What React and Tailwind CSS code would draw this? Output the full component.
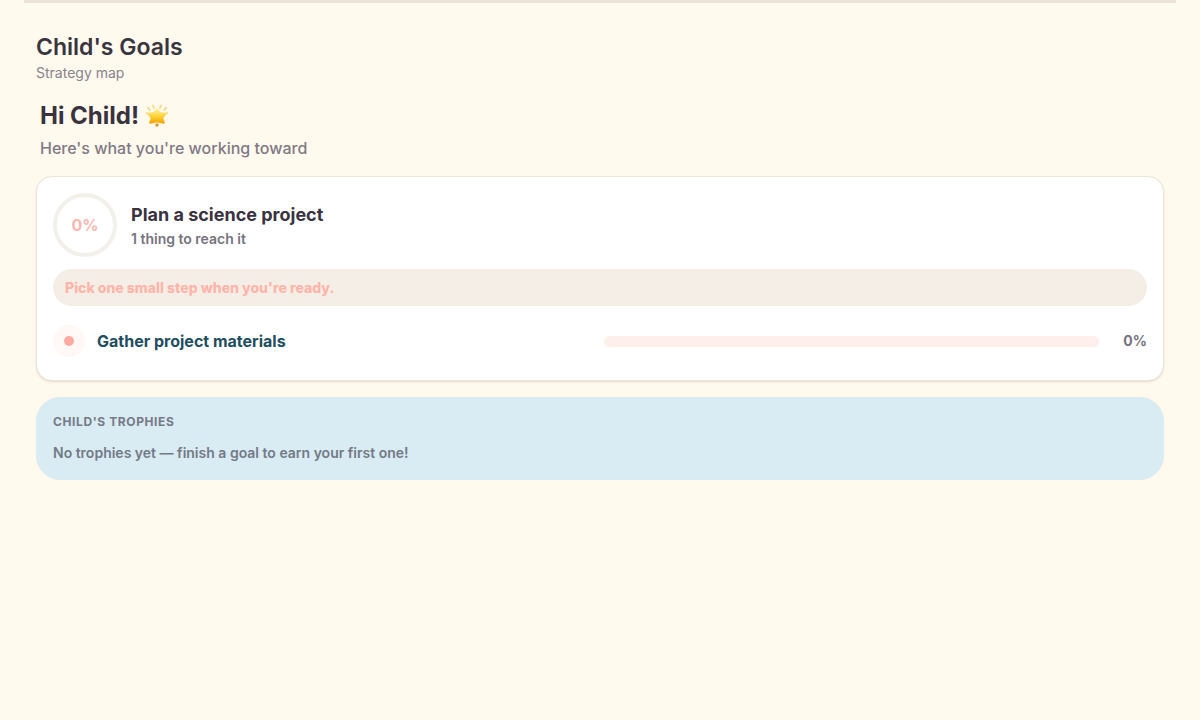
const GOALS = [
  {
    title: "Plan a science project",
    progress: 0,
    hint: "Pick one small step when you're ready.",
    steps: [{ name: "Gather project materials", progress: 0 }],
  },
];

function GlowingStar() {
  return (
    <svg viewBox="0 0 24 24" className="size-6" aria-hidden="true">
      <defs>
        <linearGradient id="star" x1="0" y1="0" x2="0" y2="1">
          <stop offset="0" stopColor="#fff3a0" />
          <stop offset="0.5" stopColor="#fcd53f" />
          <stop offset="1" stopColor="#f5a700" />
        </linearGradient>
      </defs>
      <path
        d="M9 4 8 1.500M15 4l1-2.500M4.800 6 2.800 3.600M19.200 6l2-2.400M3 9.800 1.600 9M21 9.800l1.400-.8"
        fill="none"
        stroke="#f3dc86"
        strokeWidth="1.8"
        strokeLinecap="round"
      />
      <path
        d="M12 5l2.800 4 5.700.8-3.300 4 1.600 4.900L12 17.200l-6.800 1.500 1.600-4.900-3.300-4 5.700-.8z"
        fill="url(#star)"
        stroke="url(#star)"
        strokeWidth="2"
        strokeLinejoin="round"
      />
      <circle cx="12" cy="21" r="1.700" fill="#d79a2b" />
    </svg>
  );
}

function ProgressRing({ value }) {
  const length = 2 * Math.PI * 30;
  return (
    <div className="grid size-16 shrink-0 place-items-center">
      <svg viewBox="0 0 64 64" className="col-start-1 row-start-1 size-16 -rotate-90" fill="none" strokeWidth="4">
        <circle cx="32" cy="32" r="30" stroke="#f2f0ea" />
        {value > 0 && (
          <circle cx="32" cy="32" r="30" stroke="#ffb3a7" strokeDasharray={`${(length * value) / 100} ${length}`} />
        )}
      </svg>
      <span className="col-start-1 row-start-1 text-base font-bold text-[#fab8b1]">{value}%</span>
    </div>
  );
}

function Step({ name, progress }) {
  return (
    <li className="flex items-center gap-3 py-[7px]">
      <span className="grid size-8 shrink-0 place-items-center rounded-full bg-[#fff8f7]">
        <span className="size-2.5 rounded-full bg-[#ffaba1]" />
      </span>
      <a href="#step" className="flex-1 text-base font-bold text-[#1f4e60]">
        {name}
      </a>
      <div className="h-[11px] flex-1 overflow-hidden rounded-full bg-[#ffefec]">
        <div className="h-full bg-[#ffaba1]" style={{ width: `${progress}%` }} />
      </div>
      <span className="w-9 text-right text-sm font-bold text-[#77737f]">{progress}%</span>
    </li>
  );
}

function GoalCard({ goal }) {
  return (
    <section className="rounded-2xl border border-[#ebe6da] bg-white p-4 shadow-[0_1px_2px_rgba(60,50,40,0.15)]">
      <div className="flex items-center gap-3.5">
        <ProgressRing value={goal.progress} />
        <div>
          <h3 className="text-lg leading-[25px] font-bold text-[#39323f]">{goal.title}</h3>
          <p className="mt-0.5 text-sm font-semibold text-[#77737f]">
            {goal.steps.length} thing to reach it
          </p>
        </div>
      </div>
      <p className="mt-3 rounded-full bg-[#f4eee7] px-3 py-2 text-sm leading-[21px] font-extrabold text-[#ffb5aa]">
        {goal.hint}
      </p>
      <ul className="mt-3">
        {goal.steps.map((step) => (
          <Step key={step.name} {...step} />
        ))}
      </ul>
    </section>
  );
}

export default function App() {
  return (
    <main className="min-h-screen bg-[#fff9ee] px-6 font-['Inter',sans-serif]">
      <div className="h-[3px] bg-[#e8e3d8]" />
      <div className="px-3 pt-[29px]">
        <header>
          <h1 className="text-[23px] leading-[31px] font-semibold text-[#39353f]">Child's Goals</h1>
          <p className="text-sm text-[#88838c]">Strategy map</p>
        </header>

        <div className="mt-[17px] px-1">
          <h2 className="flex items-center gap-1.5 text-2xl font-bold text-[#39323f]">
            Hi Child! <GlowingStar />
          </h2>
          <p className="mt-1 text-base font-medium text-[#7f7a85]">Here's what you're working toward</p>
        </div>

        <div className="mt-4 flex flex-col gap-4">
          {GOALS.map((goal) => (
            <GoalCard key={goal.title} goal={goal} />
          ))}

          <section className="rounded-3xl border border-[#dcebef] bg-[#d9ecf3] p-4">
            <h3 className="text-xs font-bold tracking-wider text-[#777987] uppercase">Child's Trophies</h3>
            <p className="mt-3 text-sm leading-[21px] font-semibold text-[#747987]">
              No trophies yet — finish a goal to earn your first one!
            </p>
          </section>
        </div>
      </div>
    </main>
  );
}
